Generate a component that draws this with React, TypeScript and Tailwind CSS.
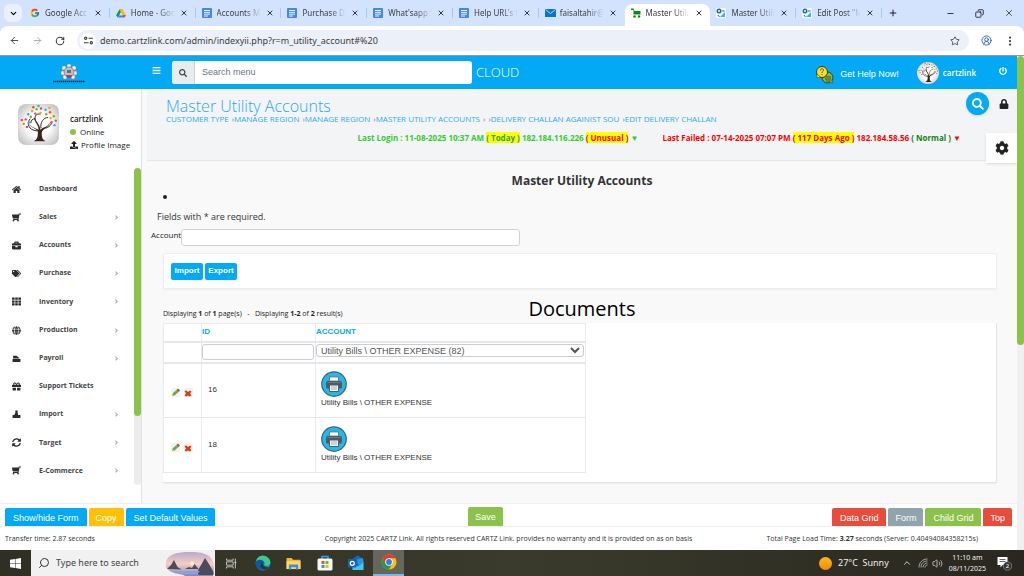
import { useState } from "react";
import type { ReactNode } from "react";
import {
  FaAngleRight,
  FaBars,
  FaBriefcase,
  FaCog,
  FaGift,
  FaGlobe,
  FaHome,
  FaLock,
  FaPowerOff,
  FaSearch,
  FaShoppingCart,
  FaSyncAlt,
  FaTags,
  FaTh,
  FaUpload,
} from "react-icons/fa";
import { FcGoogle } from "react-icons/fc";
import {
  ArrowLeft,
  ArrowRight,
  ChevronDown,
  ChevronUp,
  CircleUserRound,
  Copy,
  EllipsisVertical,
  Minus,
  Plus,
  RotateCw,
  Search,
  Star,
  Volume2,
  X,
} from "lucide-react";

const DriveIcon = () => (
  <svg viewBox="0 0 24 22" className="h-[9px] w-[10px]">
    <path d="M8 1h8l-4 7-4 7-4 6L0 15z" fill="#0f9d58" />
    <path d="M8 1h8l8 14h-8z" fill="#fbbc04" />
    <path d="M8 15h16l-4 6H4z" fill="#4285f4" />
    <path d="M16 15h8l-4 6z" fill="#ea4335" />
    <path d="M12 8l4 7H8z" fill="#d3e3fd" />
  </svg>
);

const DocIcon = () => (
  <svg viewBox="0 0 20 20" className="h-[10px] w-[10px]">
    <rect width="20" height="20" rx="2" fill="#4285f4" />
    <path d="M4 5h12M4 8.700h12M4 12.300h12M4 16h8" stroke="#fff" strokeWidth="1.800" />
  </svg>
);

const MailIcon = () => (
  <svg viewBox="0 0 22 16" className="h-[8px] w-[11px]">
    <rect width="22" height="16" rx="1" fill="#0a76c4" />
    <path d="M1 1l10 8L21 1" stroke="#bfe3fa" strokeWidth="1.800" fill="none" />
  </svg>
);

const CartIcon = () => (
  <svg viewBox="0 0 20 20" className="h-[10px] w-[10px]">
    <path d="M0 1h5l2 5h12v7H5V4H0z" fill="#0c8a17" />
    <circle cx="7" cy="17" r="2.500" fill="#0c8a17" />
    <circle cx="16" cy="17" r="2.500" fill="#0c8a17" />
  </svg>
);

const CogsIcon = () => (
  <svg viewBox="0 0 20 20" className="h-[10px] w-[10px]">
    <rect width="20" height="20" fill="#f4f8fb" />
    <circle cx="6" cy="6" r="3.500" fill="none" stroke="#1e6f9e" strokeWidth="3" />
    <path d="M8 18l10-10v10z" fill="#39b4e6" />
    <path d="M4 14l3 4M12 6h5" stroke="#1e6f9e" strokeWidth="2" />
  </svg>
);

const tabs: { title: string; icon: ReactNode; active?: boolean }[] = [
  { title: "Google Acc", icon: <FcGoogle size={10} /> },
  { title: "Home - Goo", icon: <DriveIcon /> },
  { title: "Accounts M", icon: <DocIcon /> },
  { title: "Purchase D", icon: <DocIcon /> },
  { title: "What'sapp S", icon: <DocIcon /> },
  { title: "Help URL's f", icon: <DocIcon /> },
  { title: "faisaltahir@", icon: <MailIcon /> },
  { title: "Master Utilit", icon: <CartIcon />, active: true },
  { title: "Master Utilit", icon: <CogsIcon /> },
  { title: "Edit Post \"M", icon: <CogsIcon /> },
];

const PayrollIcon = () => (
  <svg viewBox="0 0 16 16" className="h-[9px] w-[9px]" fill="currentColor">
    <path d="M1 9h14v5H1zM2 3h6l5 4v1H2z" />
  </svg>
);

const ImportIcon = () => (
  <svg viewBox="0 0 16 16" className="h-[9px] w-[9px]" fill="currentColor">
    <path d="M6 1h4v4l1 4h4v5H1V9h3l2-4z" />
  </svg>
);

const menu = [
  { label: "Dashboard", icon: <FaHome size={9} />, sub: false },
  { label: "Sales", icon: <FaShoppingCart size={9} className="-scale-x-100" />, sub: true },
  { label: "Accounts", icon: <FaBriefcase size={9} />, sub: true },
  { label: "Purchase", icon: <FaTags size={9} />, sub: true },
  { label: "Inventory", icon: <FaTh size={9} />, sub: true },
  { label: "Production", icon: <FaGlobe size={9} />, sub: true },
  { label: "Payroll", icon: <PayrollIcon />, sub: true },
  { label: "Support Tickets", icon: <FaGift size={9} />, sub: false },
  { label: "Import", icon: <ImportIcon />, sub: true },
  { label: "Target", icon: <FaSyncAlt size={9} />, sub: true },
  { label: "E-Commerce", icon: <FaShoppingCart size={9} className="-scale-x-100" />, sub: true },
];

const leaves = [
  [12, 24, "#e94f37"], [16, 16, "#39a9db"], [22, 11, "#f4a300"], [29, 8, "#7cb518"],
  [36, 7, "#e0457b"], [43, 9, "#39a9db"], [50, 13, "#e94f37"], [56, 19, "#7cb518"],
  [59, 26, "#e94f37"], [57, 33, "#39a9db"], [9, 31, "#7cb518"], [14, 36, "#e0457b"],
  [20, 20, "#7cb518"], [27, 15, "#e0457b"], [35, 14, "#f4a300"], [44, 16, "#7cb518"],
  [51, 22, "#f4a300"], [52, 29, "#e94f37"], [17, 29, "#39a9db"], [6, 25, "#e0457b"],
  [32, 3, "#39a9db"], [24, 5, "#e94f37"], [49, 6, "#f4a300"],
] as const;

function Tree({ className }: { className: string }) {
  return (
    <svg viewBox="0 0 64 64" className={className}>
      <defs>
        <radialGradient id="treeBg" r="0.7">
          <stop offset="0.4" stopColor="#fff" />
          <stop offset="1" stopColor="#b4b4b4" />
        </radialGradient>
      </defs>
      <rect width="64" height="64" fill="url(#treeBg)" />
      <path
        d="M24 58c6-2 7-7 7-14 0-6-12-6-14-14 3 6 9 7 15 10 1-8-8-12-6-19 2 7 8 10 9 19 4-3 13-5 15-12 0 8-12 10-13 17 0 7 1 11 6 13z"
        fill="#3a241a"
      />
      <path
        d="M30 42c-14-1-17-12-11-19M27 25c-2-7 3-11 8-9M36 38c-2-9 4-17 11-17M38 38c9 0 14-4 15-11M20 30c0-5 3-7 7-7"
        fill="none"
        stroke="#3a241a"
        strokeWidth="1.500"
      />
      {leaves.map(([cx, cy, fill]) => (
        <circle key={`${cx}-${cy}`} cx={cx} cy={cy} r="1.900" fill={fill} />
      ))}
    </svg>
  );
}

function BrandLogo() {
  return (
    <svg viewBox="0 0 34 20" className="h-5 w-[34px]">
      {[[17, 3], [22, 5], [12, 5], [11, 10], [23, 10], [13, 14], [21, 14]].map(([cx, cy]) => (
        <circle key={`${cx}-${cy}`} cx={cx} cy={cy} r="2.200" fill="#f2eef2" stroke="#77727c" strokeWidth="0.500" />
      ))}
      <circle cx="17" cy="9" r="5" fill="#b9c4b6" stroke="#77727c" strokeWidth="0.700" />
      <path d="M14 12h6l-1 3h-4z" fill="#a13f86" />
      <path d="M15 7h4v3h-4z" fill="#6d6f78" />
      <path d="M1 18.500h32" stroke="#10212e" strokeWidth="1.600" strokeDasharray="1.500 0.500" />
    </svg>
  );
}

function HelpIcon() {
  return (
    <svg viewBox="0 0 36 36" className="h-[18px] w-[18px]">
      <circle cx="23" cy="23" r="11" fill="#8bb53c" stroke="#27402a" strokeWidth="2" />
      <path d="M34 34l-8-1 6-6z" fill="#8bb53c" stroke="#27402a" />
      <circle cx="12" cy="12" r="11" fill="#fddf2b" stroke="#3d3a1d" strokeWidth="2" />
      <path d="M2 24v-8l7 6z" fill="#fddf2b" stroke="#3d3a1d" />
      <path d="M9 9c0-5 7-4 6 0-1 2-3 2-3 5M12 16v2" fill="none" stroke="#5c4a10" strokeWidth="2" />
      <path d="M19 22h11M18 26h12M20 30h8" stroke="#27402a" strokeWidth="1.500" />
    </svg>
  );
}

function PrinterIcon() {
  return (
    <svg viewBox="0 0 52 52" className="h-[26px] w-[26px]">
      <circle cx="26" cy="26" r="24.500" fill="#21b9ec" stroke="#3f6478" strokeWidth="2.500" />
      <rect x="17" y="12" width="18" height="8" fill="#fff" stroke="#5a6670" strokeWidth="1.500" />
      <rect x="10" y="20" width="32" height="15" rx="3" fill="#4e5b66" />
      <path d="M13 23h26" stroke="#75828d" strokeWidth="1.500" />
      <path d="M17 28h18v13H17z" fill="#f4f6f7" stroke="#4e5b66" strokeWidth="2" />
      <path d="M20 32h12M20 36h12" stroke="#8d979f" strokeWidth="1.500" />
    </svg>
  );
}

function PencilIcon() {
  return (
    <svg viewBox="0 0 18 18" className="h-[9px] w-[9px]">
      <rect width="18" height="18" rx="4" fill="#f1f1f1" />
      <path d="M2 16l2-6 7-6 4 4-8 7z" fill="#62ad45" />
      <path d="M11 4l3-3 4 4-3 3z" fill="#b0503c" />
      <path d="M2 16l1-4 3 3z" fill="#e6c07a" />
    </svg>
  );
}

function DeleteIcon() {
  return (
    <svg viewBox="0 0 18 18" className="h-[9px] w-[9px]">
      <rect width="18" height="18" rx="4" fill="#f1f1f1" />
      <path d="M1 6l4-1 3 3 4-3 3 2-3 4 3 4-4 2-3-2-4 2-3-2 3-4z" fill="#dc3e12" />
    </svg>
  );
}

function BrowserChrome() {
  return (
    <div className="bg-[#d3e2fd] font-['Noto_Sans',sans-serif]">
      <div className="flex h-[26px] items-center">
        <button aria-label="Search tabs" className="ml-1 mr-[2px] flex h-[18px] w-[18px] items-center justify-center rounded-md bg-[#e9f0fe]">
          <ChevronDown size={9} strokeWidth={3} />
        </button>
        <div className="flex h-full w-[858px] items-center">
          {tabs.map((tab, i) => (
            <div
              key={i}
              className={
                tab.active
                  ? "flex h-[22px] min-w-0 flex-1 items-center self-end rounded-t-lg bg-white pb-1 pl-[6px]"
                  : "flex h-[22px] min-w-0 flex-1 items-center self-end pb-1 pl-[6px]"
              }
            >
              <span className="w-[11px] shrink-0">{tab.icon}</span>
              <span className="ml-1 w-[46px] overflow-hidden whitespace-nowrap text-[8px] text-[#3c4043] [mask-image:linear-gradient(to_right,black_60%,transparent_95%)]">
                {tab.title}
              </span>
              <button aria-label="Close tab" className="ml-[3px] text-[#33373b]">
                <X size={8} strokeWidth={3} />
              </button>
              {!tab.active && i !== 6 && <span className="ml-auto h-[10px] w-px bg-[#a8c7fa]" />}
            </div>
          ))}
        </div>
        <button aria-label="New tab" className="ml-[6px]">
          <Plus size={10} />
        </button>
        <div className="ml-auto mr-[10px] flex items-center gap-5">
          <button aria-label="Minimize"><Minus size={9} /></button>
          <button aria-label="Restore"><Copy size={9} className="-scale-x-100" /></button>
          <button aria-label="Close"><X size={10} strokeWidth={1.5} /></button>
        </div>
      </div>
      <div className="flex h-[30px] items-center rounded-t-lg border-b border-[#8e9aa6] bg-white pr-2 text-[#3c4043]">
        <button aria-label="Back" className="ml-[9px]"><ArrowLeft size={11} /></button>
        <button aria-label="Forward" className="ml-3 text-[#a3a6a9]"><ArrowRight size={11} /></button>
        <button aria-label="Reload" className="ml-3"><RotateCw size={10} strokeWidth={2.5} /></button>
        <div className="ml-3 flex h-[21px] flex-1 items-center rounded-full bg-[#ebf0f9] px-[3px]">
          <span className="flex h-4 w-4 items-center justify-center rounded-full bg-white">
            <svg viewBox="0 0 16 16" className="h-[9px] w-[9px]" fill="none" stroke="currentColor" strokeWidth="2">
              <circle cx="3" cy="4" r="2" />
              <path d="M8 4h8M0 12h8" />
              <circle cx="13" cy="12" r="2" />
            </svg>
          </span>
          <input
            aria-label="Address"
            defaultValue="demo.cartzlink.com/admin/indexyii.php?r=m_utility_account#%20"
            className="ml-1 flex-1 bg-transparent text-[9px] outline-none"
          />
          <Star size={10} className="mr-[6px]" />
        </div>
        <CircleUserRound size={11} className="ml-3 text-[#2b5fc7]" />
        <EllipsisVertical size={12} strokeWidth={2.5} className="ml-3" />
      </div>
    </div>
  );
}

function TopBar() {
  return (
    <header className="flex h-[33px] items-center bg-[#03a9f4] text-white">
      <div className="flex w-[142px] justify-center pr-1">
        <BrandLogo />
      </div>
      <button aria-label="Toggle menu" className="mb-1 ml-[10px]">
        <FaBars size={9} />
      </button>
      <label className="ml-[11px] flex h-[23px] w-[300px] overflow-hidden rounded-[3px] bg-white">
        <span className="flex w-[23px] items-center justify-center border-r border-[#cdd2d6] bg-[#e9ecef] text-[#444]">
          <FaSearch size={8} />
        </span>
        <input
          placeholder="Search menu"
          className="flex-1 px-[7px] font-['Liberation_Sans',sans-serif] text-[9px] text-[#555] outline-none placeholder:text-[#6c757d]"
        />
      </label>
      <span className="ml-1 text-[13px] font-light">CLOUD</span>
      <a href="#help" className="ml-auto flex items-center gap-[6px] pt-1 font-['Liberation_Sans',sans-serif] text-[9px]">
        <HelpIcon />
        Get Help Now!
      </a>
      <a href="#profile" className="ml-[18px] flex items-center gap-1 text-[8px] font-semibold">
        <Tree className="h-[22px] w-[22px] rounded-full" />
        cartzlink
      </a>
      <button aria-label="Log out" className="mb-1 ml-[23px] mr-[10px]">
        <FaPowerOff size={8} />
      </button>
    </header>
  );
}

function Sidebar() {
  return (
    <aside className="flex w-[142px] shrink-0 flex-col border-r border-[#dfe3e6] bg-white">
      <div className="flex h-[79px] gap-[11px] pl-[18px] pt-[15px]">
        <Tree className="h-[41px] w-[41px] rounded-lg" />
        <div className="flex flex-col pt-2 text-[8px] leading-[13px] text-[#222]">
          <b className="font-semibold">cartzlink</b>
          <span className="flex items-center gap-1">
            <span className="h-[6px] w-[6px] rounded-full bg-[#8bc34a]" />
            Online
          </span>
          <a href="#image" className="flex items-center gap-[3px] whitespace-nowrap">
            <FaUpload size={8} />
            Profile Image
          </a>
        </div>
      </div>
      <div className="flex">
        <nav className="flex h-[317px] flex-1 flex-col pt-[7px]">
          {menu.map((item) => (
            <a key={item.label} href="#menu" className="flex flex-1 items-center pl-[12px] pr-[14px] text-[7px] font-bold text-[#444]">
              <span className="w-[27px] text-[#2c2c2c]">{item.icon}</span>
              {item.label}
              {item.sub && <FaAngleRight size={7} className="ml-auto text-[#aaa]" />}
            </a>
          ))}
        </nav>
        <div className="w-[7px] rounded-full bg-[#ececec]">
          <div className="h-[248px] rounded-full bg-[#8bc34a]" />
        </div>
      </div>
    </aside>
  );
}

function Separator() {
  return <span className="pl-[3px] text-[#777]">›</span>;
}

function PageHeading() {
  return (
    <div className="ml-[5px] flex h-[72px] justify-between border-b border-[#e4e7ea] bg-[#f3f4f6] pl-[19px]">
      <div className="min-w-0 flex-1 pt-[9px]">
        <h1 className="text-[16px] font-light leading-4 text-[#29aaf0]">Master Utility Accounts</h1>
        <div className="whitespace-nowrap text-[8px] leading-[10px] text-[#29aaf0]">
          <a href="#1">CUSTOMER TYPE</a>
          <Separator />
          <a href="#2">MANAGE REGION</a>
          <Separator />
          <a href="#3">MANAGE REGION</a>
          <Separator />
          <a href="#4">MASTER UTILITY ACCOUNTS</a>
          <Separator />
          <Separator />
          <a href="#5">DELIVERY CHALLAN AGAINIST SOU</a>
          <Separator />
          <a href="#6">EDIT DELIVERY CHALLAN</a>
        </div>
        <div className="flex justify-end gap-6 whitespace-nowrap pr-1 pt-2 text-[8px] font-bold leading-3">
          <span className="text-[#32cd32]">
            Last Login : 11-08-2025 10:37 AM <mark className="bg-[#ff0] text-[#32a532]">( Today )</mark> 182.184.116.226{" "}
            <mark className="bg-[#ff0] text-[#f00]">( Unusual )</mark> ▼
          </span>
          <span className="text-[#f00]">
            Last Failed : 07-14-2025 07:07 PM <mark className="bg-[#ff0] text-[#f00]">( 117 Days Ago )</mark> 182.184.58.56{" "}
            <span className="text-[#138013]">( Normal )</span> ▼
          </span>
        </div>
      </div>
      <div className="flex w-[52px] shrink-0 flex-col items-end">
        <div className="flex items-center gap-[10px] pr-2 pt-[3px]">
          <button aria-label="Search" className="flex h-[23px] w-[23px] items-center justify-center rounded-full bg-[#03a9f4] text-white shadow">
            <FaSearch size={12} />
          </button>
          <FaLock size={10} className="text-[#222]" />
        </div>
        <button aria-label="Settings" className="mt-[18px] flex h-[30px] w-[31px] shrink-0 items-center justify-center bg-white text-[#222] shadow">
          <FaCog size={14} />
        </button>
      </div>
    </div>
  );
}

const rows = [
  { id: 16, account: "Utility Bills \\ OTHER EXPENSE" },
  { id: 18, account: "Utility Bills \\ OTHER EXPENSE" },
];

function DocumentsTable() {
  return (
    <table className="w-[423px] table-fixed border-collapse border border-[#e9ecef] font-['Liberation_Sans',sans-serif] text-[8px] text-[#333]">
      <colgroup>
        <col className="w-[38px]" />
        <col className="w-[114px]" />
        <col />
      </colgroup>
      <thead className="text-left text-[#03a9f4]">
        <tr className="h-[18px] border-b-2 border-[#e4e8ec]">
          <th className="border-r border-[#e9ecef]"></th>
          <th className="border-r border-[#e9ecef] font-semibold">ID</th>
          <th className="font-semibold">ACCOUNT</th>
        </tr>
        <tr className="h-[21px] border-b-2 border-[#e4e8ec]">
          <td className="border-r border-[#e9ecef]"></td>
          <td className="border-r border-[#e9ecef]">
            <input aria-label="Filter ID" className="block h-4 w-[112px] rounded-[3px] border border-[#ccc] bg-white px-1" />
          </td>
          <td className="align-top">
            <select aria-label="Filter account" className="mt-px block h-[13px] w-[268px] rounded-[3px] border border-[#ccc] bg-white text-[9px] text-[#555]">
              <option>Utility Bills \ OTHER EXPENSE (82)</option>
            </select>
          </td>
        </tr>
      </thead>
      <tbody>
        {rows.map((row) => (
          <tr key={row.id} className="h-[55px] border-b border-[#e4e8ec]">
            <td className="border-r border-[#e9ecef]">
              <div className="flex gap-1 pl-[7px] pt-1">
                <button aria-label="Edit"><PencilIcon /></button>
                <button aria-label="Delete"><DeleteIcon /></button>
              </div>
            </td>
            <td className="border-r border-[#e9ecef] pl-[6px]">{row.id}</td>
            <td className="pl-[5px]">
              <PrinterIcon />
              <div className="leading-3">{row.account}</div>
            </td>
          </tr>
        ))}
      </tbody>
    </table>
  );
}

function Content() {
  const [account, setAccount] = useState("");

  return (
    <main className="min-w-0 flex-1 bg-[#f9f9f9]">
      <PageHeading />
      <div className="pb-5 pl-[21px] pr-5">
        <h2 className="pl-1 pt-3 text-center text-[12px] font-bold leading-4 text-[#333]">Master Utility Accounts</h2>
        <ul className="mt-px list-inside list-disc text-[10px] leading-3 text-[#222]">
          <li></li>
        </ul>
        <p className="-ml-[6px] mt-[9px] text-[9px] leading-3 text-[#333]">Fields with * are required.</p>
        <div className="-ml-3 mt-[6px] flex">
          <label htmlFor="account" className="text-[8px] leading-3 text-[#222]">Account</label>
          <input
            id="account"
            value={account}
            onChange={(e) => setAccount(e.target.value)}
            className="h-[17px] w-[339px] rounded-[3px] border border-[#d2d2d2] bg-white px-1 text-[8px]"
          />
        </div>
        <div className="mt-[7px] flex h-9 items-center gap-[2px] rounded-[2px] border border-[#eee] bg-white px-[7px] font-['Liberation_Sans',sans-serif] text-[8px] font-bold text-white shadow-xs">
          <button className="h-[17px] w-8 rounded-[2px] bg-[#03a9f4]">Import</button>
          <button className="h-[17px] w-8 rounded-[2px] bg-[#03a9f4]">Export</button>
        </div>
        <div className="relative flex h-[34px] items-end pb-[3px] text-[7px] leading-3 text-[#222]">
          <span>
            Displaying <b>1</b> of <b>1</b> page(s) &nbsp; - &nbsp; Displaying <b>1-2</b> of <b>2</b> result(s)
          </span>
          <h3 className="absolute inset-x-0 top-[6px] pl-1 text-center text-[20px] leading-7 text-black">Documents</h3>
        </div>
        <div className="rounded-[2px] border-b border-r border-[#e4e4e4] bg-white pb-[9px] shadow-xs">
          <DocumentsTable />
        </div>
      </div>
    </main>
  );
}

const leftActions = [
  { label: "Show/hide Form", style: "h-[18px] rounded-t-[2px] bg-[#03a9f4] px-2 pt-[3px]" },
  { label: "Copy", style: "h-[18px] rounded-t-[2px] bg-[#ffc107] px-[7px] pt-[3px]" },
  { label: "Set Default Values", style: "h-[18px] rounded-t-[2px] bg-[#03a9f4] px-2 pt-[3px]" },
];

const rightActions = [
  { label: "Data Grid", style: "h-[18px] rounded-t-[2px] bg-[#e74c3c] px-2 pt-[3px]" },
  { label: "Form", style: "h-[18px] rounded-t-[2px] bg-[#90a4ae] px-[7px] pt-[3px]" },
  { label: "Child Grid", style: "h-[18px] rounded-t-[2px] bg-[#8bc34a] px-2 pt-[3px]" },
  { label: "Top", style: "h-[18px] rounded-t-[2px] bg-[#e74c3c] px-[7px] pt-[3px]" },
];

function ActionBar() {
  return (
    <div className="grid h-6 grid-cols-[1fr_auto_1fr] items-end border-y border-[#eee] bg-white px-[5px] font-['Liberation_Sans',sans-serif] text-[9px] text-white">
      <div className="flex gap-[2px]">
        {leftActions.map((a) => (
          <button key={a.label} className={a.style}>{a.label}</button>
        ))}
      </div>
      <button className="mr-[46px] h-[19px] rounded-t-[2px] bg-[#8bc34a] px-[7px] pt-[2px]">Save</button>
      <div className="flex justify-end gap-[2px]">
        {rightActions.map((a) => (
          <button key={a.label} className={a.style}>{a.label}</button>
        ))}
      </div>
    </div>
  );
}

function Footer() {
  return (
    <footer className="grid h-[23px] grid-cols-[1fr_auto_1fr] items-center whitespace-nowrap bg-white px-[5px] pt-[2px] text-[7px] text-[#333]">
      <span>Transfer time: 2.87 seconds</span>
      <span>Copyright 2025 CARTZ Link. All rights reserved CARTZ Link. provides no warranty and it is provided on as on basis</span>
      <span className="pr-[34px] text-right">
        Total Page Load Time: <b>3.27</b> seconds (Server: 0.40494084358215s)
      </span>
    </footer>
  );
}

const pinned = [
  {
    name: "Edge",
    icon: (
      <svg viewBox="0 0 32 32" className="h-4 w-4">
        <circle cx="16" cy="16" r="15" fill="#1583d0" />
        <path d="M2 12C5 2 16-1 24 4c6 4 8 10 6 14-3 5-9 4-12 2 3-4 1-8-4-9-5-1-9 1-12 1z" fill="#3fc98a" />
        <path d="M2 13c5-6 15-4 16 2-6 0-7 9 0 13-9 4-19-4-16-15z" fill="#0c59a4" />
        <path d="M17 15c-3 5 3 11 11 9-3 5-9 7-13 4-6-5-4-12 2-13z" fill="#32342a" />
      </svg>
    ),
  },
  {
    name: "File Explorer",
    icon: (
      <svg viewBox="0 0 32 28" className="h-[13px] w-[15px]">
        <path d="M1 2h11l3 4h16v20H1z" fill="#f2b632" />
        <path d="M1 9h30v17H1z" fill="#ffd869" />
        <path d="M6 27V16h20v11h-5v-5H11v5z" fill="#3d8fdd" />
      </svg>
    ),
  },
  {
    name: "Microsoft Store",
    icon: (
      <svg viewBox="0 0 32 32" className="h-4 w-4">
        <path d="M10 8V3h12v5" fill="none" stroke="#2ea5e8" strokeWidth="3" />
        <rect x="1" y="7" width="30" height="24" rx="3" fill="#f5f7f9" />
        <path d="M9 12h6v6H9z" fill="#e8502e" />
        <path d="M17 12h6v6h-6z" fill="#7fb52c" />
        <path d="M9 20h6v6H9z" fill="#2a9be0" />
        <path d="M17 20h6v6h-6z" fill="#f7b912" />
      </svg>
    ),
  },
  {
    name: "Outlook",
    icon: (
      <svg viewBox="0 0 32 32" className="h-4 w-4">
        <path d="M9 8L20 1l11 8v19H9z" fill="#1769bd" />
        <path d="M9 16l11 7 11-10v17H9z" fill="#45c6ef" />
        <path d="M18 9l12-3v9l-9 7z" fill="#2b95df" />
        <rect y="8" width="17" height="17" rx="2" fill="#0c64b7" />
        <circle cx="8.500" cy="16.500" r="4" fill="none" stroke="#fff" strokeWidth="2.500" />
      </svg>
    ),
  },
];

function Taskbar() {
  return (
    <div className="flex h-[26px] shrink-0 items-stretch bg-linear-to-r from-[#302f24] via-[#3a3b2c] to-[#29271f] font-['Noto_Sans',sans-serif] text-[9px] text-[#eee]">
      <button aria-label="Start" className="flex w-[31px] items-center justify-center">
        <svg viewBox="0 0 20 20" className="h-[11px] w-[11px]" fill="#fff">
          <path d="M0 3l9-1v7H0zM10 2l10-2v9H10zM0 10h9v8l-9-1zM10 10h10v10l-10-2z" />
        </svg>
      </button>
      <label className="flex w-[184px] items-center bg-[#f1f1f1] text-[#333]">
        <Search size={12} className="ml-[7px] mr-[6px] -scale-x-100" />
        <input placeholder="Type here to search" className="min-w-0 flex-1 outline-none placeholder:text-[#444]" />
        <svg viewBox="0 0 100 52" className="h-[26px] w-[50px]">
          <defs>
            <linearGradient id="sunset" x2="0" y2="1">
              <stop offset="0" stopColor="#b9a9cf" />
              <stop offset="0.500" stopColor="#f6cfc0" />
              <stop offset="1" stopColor="#7e86c4" />
            </linearGradient>
          </defs>
          <path d="M2 34C-2 8 25 4 50 4s50 4 48 34l-2 14H40c-6-6-30-2-38-18z" fill="url(#sunset)" />
          <circle cx="54" cy="27" r="4" fill="#fff1d8" />
          <path d="M4 38l8-8 6-10 7 14 8 5zM40 38l8-4 6 2 5-8 8 10zM64 44l8-14 8-14 8 12 9 16v6H68z" fill="#4c4b5c" />
          <path d="M10 42h60l-6 6H36z" fill="#8ea0d4" />
        </svg>
      </label>
      <button aria-label="Task view" className="flex w-8 items-center justify-center">
        <svg viewBox="0 0 20 20" className="h-[11px] w-[11px]" fill="none" stroke="#ddd" strokeWidth="1.500">
          <path d="M1 1v3h12V1M1 19v-3h12v3M1 7h12v6H1zM17 1v18M15 8h4" />
        </svg>
      </button>
      {pinned.map((app) => (
        <button key={app.name} aria-label={app.name} className="flex w-[31px] items-center justify-center">
          {app.icon}
        </button>
      ))}
      <button aria-label="Chrome" className="ml-[2px] flex w-[31px] items-center justify-center border-b-2 border-[#76b9ed] bg-[#66665d]">
        <svg viewBox="0 0 32 32" className="h-4 w-4">
          <circle cx="16" cy="16" r="15" fill="#fbc116" />
          <path d="M3 8.500A15 15 0 0 1 29 8.500H16L9.500 20z" fill="#e33b2e" />
          <path d="M3 8.500A15 15 0 0 0 16 31l6.500-11.500H10z" fill="#269a4a" />
          <circle cx="16" cy="16" r="7.500" fill="#fff" />
          <circle cx="16" cy="16" r="5.800" fill="#3b78e7" />
        </svg>
      </button>
      <div className="ml-auto flex items-center pr-3">
        <span className="h-[13px] w-[13px] rounded-full bg-linear-to-b from-[#ffb71b] to-[#f58a07]" />
        <span className="ml-[6px] whitespace-pre">27°C  Sunny</span>
        <ChevronUp size={10} className="ml-[13px]" />
        <svg viewBox="0 0 20 20" className="ml-[6px] h-[10px] w-[10px]" fill="none" stroke="#ccc" strokeWidth="1.500">
          <path d="M2 19C2 9 9 2 19 2M6 19C6 11 11 6 19 6M10 19c0-5 4-9 9-9M14 19c0-3 2-5 5-5" />
        </svg>
        <Volume2 size={11} strokeWidth={1.5} className="ml-1" />
        <div className="ml-[6px] flex flex-col items-center text-[7px] leading-[11px]">
          <span>11:10 am</span>
          <span>08/11/2025</span>
        </div>
        <svg viewBox="0 0 30 30" className="ml-[11px] h-[15px] w-[15px]">
          <path d="M1 2h20v16H11l-4 5v-5H1z" fill="#fff" />
          <path d="M5 7h12M5 11h12" stroke="#333" strokeWidth="1.500" />
          <circle cx="21" cy="20" r="8.500" fill="#333" stroke="#bbb" />
          <text x="21" y="24" textAnchor="middle" fontSize="12" fill="#fff">2</text>
        </svg>
      </div>
    </div>
  );
}

export default function App() {
  return (
    <div className="flex min-h-screen flex-col bg-white font-['Open_Sans',sans-serif]">
      <BrowserChrome />
      <div className="flex flex-1">
        <div className="flex min-w-0 flex-1 flex-col">
          <TopBar />
          <div className="flex flex-1">
            <Sidebar />
            <Content />
          </div>
          <ActionBar />
          <Footer />
        </div>
        <div className="w-[7px] shrink-0 bg-[#f0f0f0]">
          <div className="h-[289px] rounded-full bg-[#8bc34a]" />
        </div>
      </div>
      <Taskbar />
    </div>
  );
}
